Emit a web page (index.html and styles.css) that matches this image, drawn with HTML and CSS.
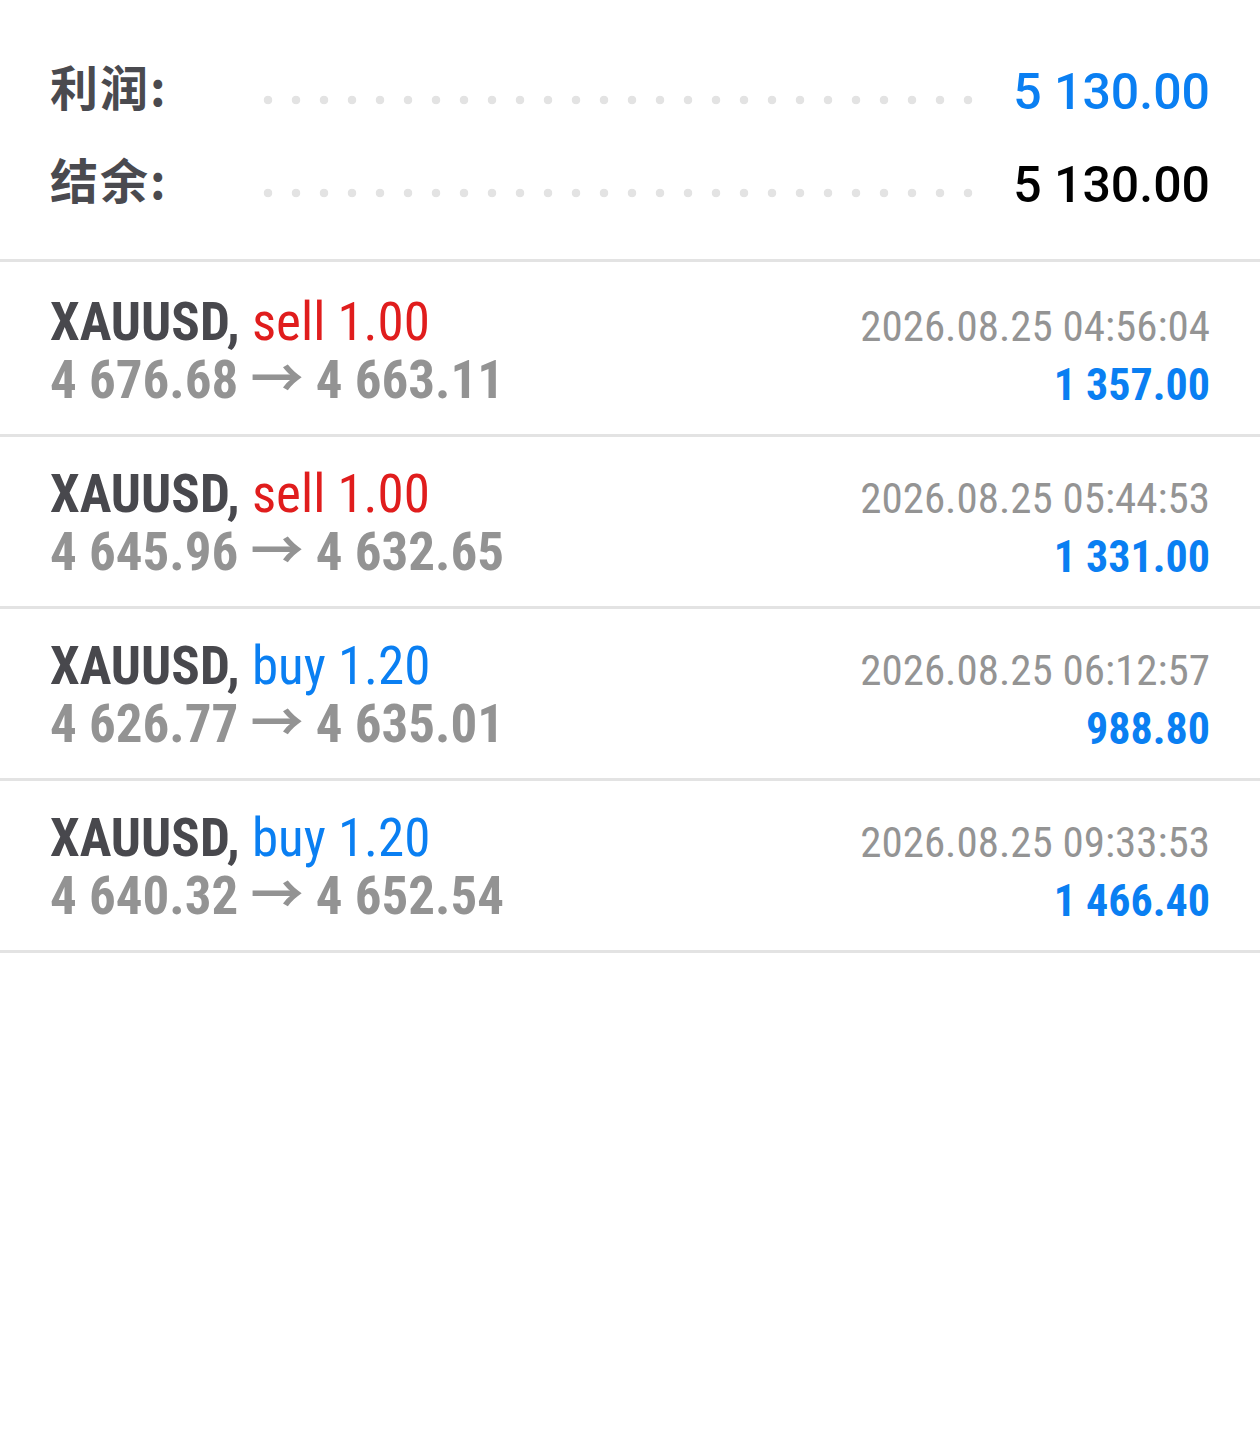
FILE: index.html
```html
<!DOCTYPE html>
<html lang="zh">
<head>
	<meta charset="UTF-8">
	<title>历史</title>
	<link rel="stylesheet" href="styles.css">
</head>
<body>

<div class="summary">
	<div class="sum_row">
		<span class="sum_label">利润:</span>
		<span class="sum_dots"></span>
		<span class="sum_value blue">5 130.00</span>
	</div>
	<div class="sum_row">
		<span class="sum_label">结余:</span>
		<span class="sum_dots"></span>
		<span class="sum_value">5 130.00</span>
	</div>
</div>

<ul class="deals">
	<li class="deal">
		<div class="deal_left">
			<div class="deal_title">XAUUSD, <span class="sell">sell 1.00</span></div>
			<div class="deal_price">4 676.68 → 4 663.11</div>
		</div>
		<div class="deal_right">
			<div class="deal_time">2026.08.25 04:56:04</div>
			<div class="deal_profit">1 357.00</div>
		</div>
	</li>
	<li class="deal">
		<div class="deal_left">
			<div class="deal_title">XAUUSD, <span class="sell">sell 1.00</span></div>
			<div class="deal_price">4 645.96 → 4 632.65</div>
		</div>
		<div class="deal_right">
			<div class="deal_time">2026.08.25 05:44:53</div>
			<div class="deal_profit">1 331.00</div>
		</div>
	</li>
	<li class="deal">
		<div class="deal_left">
			<div class="deal_title">XAUUSD, <span class="buy">buy 1.20</span></div>
			<div class="deal_price">4 626.77 → 4 635.01</div>
		</div>
		<div class="deal_right">
			<div class="deal_time">2026.08.25 06:12:57</div>
			<div class="deal_profit">988.80</div>
		</div>
	</li>
	<li class="deal">
		<div class="deal_left">
			<div class="deal_title">XAUUSD, <span class="buy">buy 1.20</span></div>
			<div class="deal_price">4 640.32 → 4 652.54</div>
		</div>
		<div class="deal_right">
			<div class="deal_time">2026.08.25 09:33:53</div>
			<div class="deal_profit">1 466.40</div>
		</div>
	</li>
</ul>

</body>
</html>
```

FILE: styles.css
```css
*{
	margin: 0;
	padding: 0;
}
li{
	list-style: none;
}
body{
	background: #fff;
	font-family: Roboto, "Noto Sans CJK SC", sans-serif;
}

/* 顶部汇总 */
.summary{
	padding: 45px 50px 28px;
	border-bottom: 3px solid #e3e3e3;
}
.sum_row{
	display: flex;
	align-items: center;
	height: 93px;
}
.sum_label{
	width: 204px;
	padding-bottom: 14px;
	font-family: "Noto Sans CJK SC", sans-serif;
	font-size: 48px;
	font-weight: bold;
	letter-spacing: 2px;
	color: #4a4a4f;
}
.sum_dots{
	width: 728px;
	height: 20px;
	margin-top: 16px;
	background: radial-gradient(circle, #e3e3e3 4px, transparent 4.6px) 0 0 / 28px 20px repeat-x;
}
.sum_value{
	margin-left: auto;
	font-size: 50px;
	font-weight: 500;
	color: #000;
}
.blue{
	color: #0a7ff2;
}

/* 成交列表 */
.deal{
	display: flex;
	justify-content: space-between;
	height: 169px;
	padding: 0 50px;
	border-bottom: 3px solid #e3e3e3;
	font-stretch: 75%;
}
.deal:first-child{
	padding-top: 3px;
}
.deal_left{
	padding-top: 28px;
}
.deal_title{
	font-size: 53px;
	font-weight: bold;
	line-height: 58px;
	color: #48484d;
}
.deal_title span{
	font-weight: normal;
}
.sell{
	color: #e01d1d;
}
.buy{
	color: #0a7ff2;
}
.deal_price{
	font-size: 53px;
	font-weight: bold;
	line-height: 58px;
	color: #939393;
}
.deal_right{
	padding-top: 32px;
	text-align: right;
}
.deal_time{
	font-size: 43px;
	line-height: 58px;
	color: #949494;
}
.deal_profit{
	font-size: 44px;
	font-weight: bold;
	line-height: 60px;
	color: #0a7ff2;
}
```
